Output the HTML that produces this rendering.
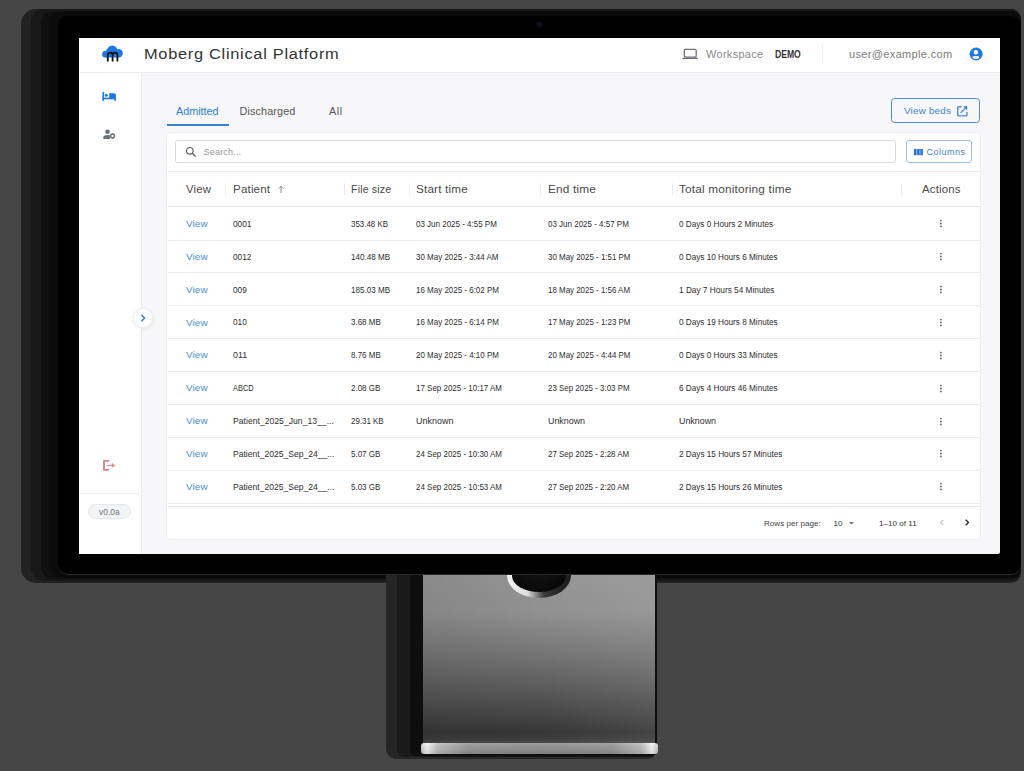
<!DOCTYPE html>
<html><head><meta charset="utf-8">
<style>
*{margin:0;padding:0;box-sizing:border-box}
html,body{width:1024px;height:771px;overflow:hidden;background:#464646;font-family:"Liberation Sans",sans-serif;color:#333}
.a{position:absolute}
.t{position:absolute;line-height:1;white-space:nowrap}
.d{font-size:9.2px;color:#2e2e2e}
#sh1{left:21px;top:9px;width:1000px;height:574px;border-radius:15px 10px 10px 15px;background:#222}
#sh2{left:31px;top:9px;width:990px;height:572px;border-radius:13px 10px 10px 13px;background:#181818}
#sh2b{left:41px;top:11px;width:980px;height:568px;border-radius:12px 10px 10px 12px;background:#0f0f0f}
#sh3{left:51px;top:11px;width:970px;height:567px;border-radius:12px 10px 10px 12px;background:#0b0b0b}
#bez{left:58px;top:16px;width:963px;height:559px;border-radius:10px;background:#000;border-bottom:1px solid #2a2a2a}
#screen{left:79px;top:38px;width:921px;height:516px;background:#f7f7f9;overflow:hidden;border-radius:0 0 2px 2px}
#ssh1{left:386px;top:575px;width:271px;height:184px;border-radius:0 0 10px 10px;background:#262626}
#ssh2{left:397px;top:575px;width:260px;height:182px;border-radius:0 0 8px 8px;background:#1a1a1a}
#ssh3{left:410px;top:575px;width:247px;height:181px;border-radius:0 0 6px 6px;background:#0e0e0e}
#stand{left:423px;top:575px;width:232px;height:169px;overflow:hidden;background:linear-gradient(90deg,rgba(0,0,0,0.07),rgba(255,255,255,0.0) 50%,rgba(255,255,255,0.07)),linear-gradient(180deg,#949494 0%,#909090 22%,#777 45%,#5c5c5c 66%,#454545 83%,#363636 93%,#3c3c3c 97%,#4e4e4e 100%)}
#hole{left:83.6px;top:-22.7px;width:64.5px;height:45.4px;border-radius:50%;background:linear-gradient(90deg,#f2f2f2 0%,#dcdcdc 32%,#8a8a8a 45%,#3a3a3a 58%,#262626 80%,#1e1e1e 100%)}
#hole2{left:88.7px;top:-16.5px;width:54.7px;height:33px;border-radius:50%;background:radial-gradient(ellipse at 50% 30%,#141414 0%,#0b0b0b 60%,#050505 100%)}
#base{left:421px;top:743px;width:237px;height:11px;border-radius:3px;background:linear-gradient(180deg,rgba(255,255,255,0.12),rgba(0,0,0,0.12)),linear-gradient(90deg,#c8c8c8 0%,#f7f7f7 2.5%,#bdbdbd 7%,#959595 20%,#8e8e8e 50%,#959595 80%,#bdbdbd 93%,#f7f7f7 97.5%,#c8c8c8 100%)}
#cam{left:537px;top:22px;width:5px;height:5px;border-radius:50%;background:#0c1220;box-shadow:0 0 1px 0.3px #1a1a1a}
</style></head>
<body>

<div class="a" id="sh1"></div>
<div class="a" id="sh2"></div>
<div class="a" id="sh2b"></div>
<div class="a" id="sh3"></div>
<div class="a" id="ssh1"></div>
<div class="a" id="ssh2"></div>
<div class="a" id="ssh3"></div>
<div class="a" id="stand"><div class="a" id="hole"></div><div class="a" id="hole2"></div></div>
<div class="a" id="bez"></div>
<div class="a" id="base"></div>
<div class="a" id="cam"></div>
<div class="a" id="screen"></div>


<div class="a" style="left:79px;top:38px;width:921px;height:35px;background:#fff;border-bottom:1px solid #ebebeb"></div>
<svg class="a" style="left:101px;top:44px" width="24" height="19" viewBox="0 0 24 19">
 <g fill="#1d7ae4"><circle cx="4.6" cy="10.2" r="3.4"/><circle cx="11.3" cy="6.6" r="5.2"/><circle cx="17.6" cy="9.3" r="4.2"/><circle cx="8" cy="7.5" r="3"/><rect x="4.6" y="8" width="13" height="5.5"/></g>
 <path d="M6.8 17.4 V11.2 C6.8 9.5 7.9 8.7 9.2 8.7 C10.5 8.7 11.6 9.5 11.6 11.2 V17.4 M11.6 11.2 C11.6 9.5 12.7 8.7 14 8.7 C15.3 8.7 16.4 9.5 16.4 11.2 V17.4" stroke="#111" stroke-width="1.8" fill="none"/>
</svg>
<div class="t" style="left:144.2px;top:47.2px;font-size:14px;letter-spacing:0.6px;color:#333;transform:scaleX(1.171);transform-origin:0 0">Moberg Clinical Platform</div>
<svg class="a" style="left:682px;top:48px" width="17" height="12" viewBox="0 0 17 12">
 <rect x="2.3" y="1.4" width="11.9" height="7.6" rx="1" fill="none" stroke="#6b6f76" stroke-width="1.25"/>
 <rect x="0.3" y="9.8" width="15.7" height="1.3" rx="0.4" fill="#6b6f76"/>
</svg>
<div class="t" style="left:706.2px;top:50.3px;font-size:10.1px;letter-spacing:0.3px;color:#8a8a8a;transform:scaleX(1.085);transform-origin:0 0">Workspace</div>
<div class="t" style="left:775px;top:49.9px;font-size:10px;font-weight:bold;color:#333;transform:scaleX(0.86);transform-origin:0 0">DEMO</div>
<div class="a" style="left:822px;top:44px;width:1px;height:20px;background:#ececec"></div>
<div class="t" style="left:849px;top:50.2px;font-size:10.2px;letter-spacing:0.3px;color:#7c7c7c;transform:scaleX(1.084);transform-origin:0 0">user@example.com</div>
<svg class="a" style="left:969px;top:47px" width="14" height="14" viewBox="0 0 14 14">
 <circle cx="7.1" cy="7" r="6.5" fill="#1d7ae4"/>
 <circle cx="6.9" cy="5.3" r="2.2" fill="#fff"/>
 <ellipse cx="6.9" cy="10.5" rx="3.4" ry="1.4" fill="#fff"/>
</svg>


<div class="a" style="left:79px;top:73px;width:63px;height:481px;background:#fff;border-right:1px solid #ececef"></div>
<svg class="a" style="left:102px;top:91px" width="15" height="11" viewBox="0 0 15 11">
 <rect x="0.4" y="1.1" width="1.6" height="8.8" fill="#1d7ae4"/>
 <circle cx="4.3" cy="4.2" r="1.5" fill="#1d7ae4"/>
 <path d="M7.2 2.3 H12.1 C13.1 2.3 13.9 3.1 13.9 4.1 V7.2 H7.2 Z" fill="#1d7ae4"/>
 <rect x="0.4" y="6.7" width="13.5" height="1.6" fill="#1d7ae4"/>
 <rect x="12.4" y="6.7" width="1.5" height="3.2" fill="#1d7ae4"/>
</svg>
<svg class="a" style="left:102px;top:128px" width="15" height="12" viewBox="0 0 15 12">
 <circle cx="5.5" cy="3.8" r="2.3" fill="#6b717a"/>
 <path d="M1.3 10.9 V9.2 C1.3 7.6 3.5 6.9 5.5 6.9 C6.5 6.9 7.3 7 7.9 7.2 V10.9 Z" fill="#6b717a"/>
 <circle cx="10.5" cy="8" r="1.9" fill="none" stroke="#6b717a" stroke-width="1.5"/>
 <rect x="10" y="5.3" width="1" height="1" fill="#6b717a"/><rect x="10" y="9.8" width="1" height="1" fill="#6b717a"/>
</svg>
<svg class="a" style="left:102px;top:458px" width="15" height="14" viewBox="0 0 15 14">
 <path d="M7.1 2.9 H2 V11.9 H7.1" stroke="#de858c" stroke-width="1.9" fill="none" stroke-linejoin="round"/>
 <path d="M4.9 7.4 H11" stroke="#de858c" stroke-width="1.1"/>
 <path d="M10.2 5 L13.1 7.4 L10.2 9.8 Z" fill="#de858c"/>
</svg>
<div class="a" style="left:80px;top:493px;width:59px;height:1px;background:#efeff2"></div>
<div class="a" style="left:88px;top:504px;width:42.5px;height:14.8px;border-radius:8px;background:#f3f4f6;border:1px solid #e5e7eb"></div>
<div class="t" style="left:99px;top:508.3px;font-size:8.4px;letter-spacing:0.05px;color:#6f747c">v0.0a</div>


<div class="t" style="left:176px;top:105.5px;font-size:10.8px;color:#2f7bd3">Admitted</div>
<div class="t" style="left:239.6px;top:105.5px;font-size:10.8px;letter-spacing:0.12px;color:#555">Discharged</div>
<div class="t" style="left:329px;top:105.5px;font-size:10.8px;letter-spacing:0.6px;color:#555">All</div>
<div class="a" style="left:167px;top:124.3px;width:62px;height:1.8px;background:#3a7fd0"></div>
<div class="a" style="left:891.2px;top:98.2px;width:89.2px;height:25px;border:1.8px solid #4b8dd8;border-radius:3.5px"></div>
<div class="t" style="left:903.5px;top:107.2px;font-size:9px;letter-spacing:0.2px;color:#3f84d3;transform:scaleX(1.091);transform-origin:0 0">View beds</div>
<svg class="a" style="left:956px;top:105px" width="12" height="12" viewBox="0 0 12 12">
 <path d="M5.6 1.7 H2.6 Q1.7 1.7 1.7 2.6 V10 Q1.7 10.9 2.6 10.9 H10 Q10.9 10.9 10.9 10 V7" stroke="#4a8ad6" stroke-width="1.4" fill="none"/>
 <path d="M4.8 7.8 L10.2 2.4" stroke="#4a8ad6" stroke-width="1.3"/>
 <path d="M7.2 1.2 H11.2 V5.2 Z" fill="#2f7ad8"/>
</svg>
<div class="a" style="left:165.9px;top:131.9px;width:814.9px;height:408px;background:#fff;border:1px solid #eceef1;border-radius:4px"></div>
<div class="a" style="left:175px;top:140.4px;width:720.8px;height:23px;border:1.2px solid #dcdcdf;border-radius:3px"></div>
<svg class="a" style="left:185px;top:146px" width="12" height="12" viewBox="0 0 12 12">
 <circle cx="4.8" cy="4.8" r="3.3" stroke="#666" stroke-width="1.2" fill="none"/>
 <path d="M7.2 7.2 L10.6 10.6" stroke="#666" stroke-width="1.4"/>
</svg>
<div class="t" style="left:203.5px;top:148.3px;font-size:9.1px;letter-spacing:0.15px;color:#9a9a9a">Search...</div>
<div class="a" style="left:906.2px;top:140.2px;width:66px;height:23.2px;border:1.3px solid #9dbde8;border-radius:3px"></div>
<svg class="a" style="left:914px;top:148.8px" width="9" height="7" viewBox="0 0 9 7">
 <rect x="0" y="0" width="2.5" height="6.2" fill="#1e6fd8"/><rect x="3.15" y="0" width="2.5" height="6.2" fill="#1e6fd8"/><rect x="6.3" y="0" width="2.5" height="6.2" fill="#1e6fd8"/>
</svg>
<div class="t" style="left:926.6px;top:148px;font-size:8.8px;letter-spacing:0.58px;color:#3c82d2">Columns</div>
<div class="a" style="left:168px;top:171px;width:812px;height:1px;background:#eceef1"></div>
<div class="t" style="left:185.9px;top:183.8px;font-size:10.5px;letter-spacing:0.15px;color:#4a4a4a;transform:scaleX(1.087);transform-origin:0 0">View</div>
<div class="t" style="left:233.4px;top:183.8px;font-size:10.5px;letter-spacing:0.15px;color:#4a4a4a;transform:scaleX(1.103);transform-origin:0 0">Patient</div>
<div class="t" style="left:351px;top:183.8px;font-size:10.5px;letter-spacing:0.15px;color:#4a4a4a;transform:scaleX(1.013);transform-origin:0 0">File size</div>
<div class="t" style="left:416.4px;top:183.8px;font-size:10.5px;letter-spacing:0.15px;color:#4a4a4a;transform:scaleX(1.117);transform-origin:0 0">Start time</div>
<div class="t" style="left:547.7px;top:183.8px;font-size:10.5px;letter-spacing:0.15px;color:#4a4a4a;transform:scaleX(1.126);transform-origin:0 0">End time</div>
<div class="t" style="left:678.7px;top:183.8px;font-size:10.5px;letter-spacing:0.15px;color:#4a4a4a;transform:scaleX(1.125);transform-origin:0 0">Total monitoring time</div>
<div class="t" style="left:921.7px;top:183.8px;font-size:10.5px;letter-spacing:0.15px;color:#4a4a4a;transform:scaleX(1.086);transform-origin:0 0">Actions</div>
<svg class="a" style="left:276.5px;top:185px" width="8" height="9" viewBox="0 0 8 9"><path d="M4 8 V1.2 M1.6 3.6 L4 1.2 L6.4 3.6" stroke="#8a8a8a" stroke-width="0.95" fill="none"/></svg>
<div class="a" style="left:225.2px;top:183px;width:1px;height:12px;background:#ececee"></div>
<div class="a" style="left:344.1px;top:183px;width:1px;height:12px;background:#ececee"></div>
<div class="a" style="left:409.2px;top:183px;width:1px;height:12px;background:#ececee"></div>
<div class="a" style="left:540.3px;top:183px;width:1px;height:12px;background:#ececee"></div>
<div class="a" style="left:671.5px;top:183px;width:1px;height:12px;background:#ececee"></div>
<div class="a" style="left:901.2px;top:183px;width:1px;height:12px;background:#ececee"></div>
<div class="a" style="left:168px;top:206px;width:812px;height:1px;background:#e6e7ea"></div>
<div class="t" style="left:185.6px;top:218.94px;font-size:9.4px;letter-spacing:0.1px;color:#4a8fd9;transform:scaleX(1.057);transform-origin:0 0">View</div>
<div class="t d" style="left:232.9px;top:219.91px;transform:scaleX(0.905);transform-origin:0 0">0001</div>
<div class="t d" style="left:351px;top:219.91px;transform:scaleX(0.8628);transform-origin:0 0">353.48 KB</div>
<div class="t d" style="left:416.4px;top:219.91px;transform:scaleX(0.8699);transform-origin:0 0">03 Jun 2025 - 4:55 PM</div>
<div class="t d" style="left:547.7px;top:219.91px;transform:scaleX(0.8699);transform-origin:0 0">03 Jun 2025 - 4:57 PM</div>
<div class="t d" style="left:678.5px;top:219.91px;transform:scaleX(0.8896);transform-origin:0 0">0 Days 0 Hours 2 Minutes</div>
<svg class="a" style="left:939px;top:218.40px" width="4" height="10" viewBox="0 0 4 10"><circle cx="1.9" cy="2.6" r="0.95" fill="#6a6a6a"/><circle cx="1.9" cy="5.5" r="0.95" fill="#6a6a6a"/><circle cx="1.9" cy="8.4" r="0.95" fill="#6a6a6a"/></svg>
<div class="a" style="left:168px;top:239.58px;width:812px;height:1px;background:#ececee"></div>
<div class="t" style="left:185.6px;top:251.80px;font-size:9.4px;letter-spacing:0.1px;color:#4a8fd9;transform:scaleX(1.057);transform-origin:0 0">View</div>
<div class="t d" style="left:232.9px;top:252.77px;transform:scaleX(0.905);transform-origin:0 0">0012</div>
<div class="t d" style="left:351px;top:252.77px;transform:scaleX(0.8795);transform-origin:0 0">140.48 MB</div>
<div class="t d" style="left:416.4px;top:252.77px;transform:scaleX(0.8684);transform-origin:0 0">30 May 2025 - 3:44 AM</div>
<div class="t d" style="left:547.7px;top:252.77px;transform:scaleX(0.8632);transform-origin:0 0">30 May 2025 - 1:51 PM</div>
<div class="t d" style="left:678.5px;top:252.77px;transform:scaleX(0.8901);transform-origin:0 0">0 Days 10 Hours 6 Minutes</div>
<svg class="a" style="left:939px;top:251.26px" width="4" height="10" viewBox="0 0 4 10"><circle cx="1.9" cy="2.6" r="0.95" fill="#6a6a6a"/><circle cx="1.9" cy="5.5" r="0.95" fill="#6a6a6a"/><circle cx="1.9" cy="8.4" r="0.95" fill="#6a6a6a"/></svg>
<div class="a" style="left:168px;top:272.46px;width:812px;height:1px;background:#ececee"></div>
<div class="t" style="left:185.6px;top:284.66px;font-size:9.4px;letter-spacing:0.1px;color:#4a8fd9;transform:scaleX(1.057);transform-origin:0 0">View</div>
<div class="t d" style="left:232.9px;top:285.63px;transform:scaleX(0.9);transform-origin:0 0">009</div>
<div class="t d" style="left:351px;top:285.63px;transform:scaleX(0.8795);transform-origin:0 0">185.03 MB</div>
<div class="t d" style="left:416.4px;top:285.63px;transform:scaleX(0.8684);transform-origin:0 0">16 May 2025 - 6:02 PM</div>
<div class="t d" style="left:547.7px;top:285.63px;transform:scaleX(0.8632);transform-origin:0 0">18 May 2025 - 1:56 AM</div>
<div class="t d" style="left:678.5px;top:285.63px;transform:scaleX(0.8991);transform-origin:0 0">1 Day 7 Hours 54 Minutes</div>
<svg class="a" style="left:939px;top:284.12px" width="4" height="10" viewBox="0 0 4 10"><circle cx="1.9" cy="2.6" r="0.95" fill="#6a6a6a"/><circle cx="1.9" cy="5.5" r="0.95" fill="#6a6a6a"/><circle cx="1.9" cy="8.4" r="0.95" fill="#6a6a6a"/></svg>
<div class="a" style="left:168px;top:305.34px;width:812px;height:1px;background:#ececee"></div>
<div class="t" style="left:185.6px;top:317.52px;font-size:9.4px;letter-spacing:0.1px;color:#4a8fd9;transform:scaleX(1.057);transform-origin:0 0">View</div>
<div class="t d" style="left:232.9px;top:318.49px;transform:scaleX(0.9);transform-origin:0 0">010</div>
<div class="t d" style="left:351px;top:318.49px;transform:scaleX(0.8706);transform-origin:0 0">3.68 MB</div>
<div class="t d" style="left:416.4px;top:318.49px;transform:scaleX(0.8674);transform-origin:0 0">16 May 2025 - 6:14 PM</div>
<div class="t d" style="left:547.7px;top:318.49px;transform:scaleX(0.8632);transform-origin:0 0">17 May 2025 - 1:23 PM</div>
<div class="t d" style="left:678.5px;top:318.49px;transform:scaleX(0.8901);transform-origin:0 0">0 Days 19 Hours 8 Minutes</div>
<svg class="a" style="left:939px;top:316.98px" width="4" height="10" viewBox="0 0 4 10"><circle cx="1.9" cy="2.6" r="0.95" fill="#6a6a6a"/><circle cx="1.9" cy="5.5" r="0.95" fill="#6a6a6a"/><circle cx="1.9" cy="8.4" r="0.95" fill="#6a6a6a"/></svg>
<div class="a" style="left:168px;top:338.22px;width:812px;height:1px;background:#ececee"></div>
<div class="t" style="left:185.6px;top:350.38px;font-size:9.4px;letter-spacing:0.1px;color:#4a8fd9;transform:scaleX(1.057);transform-origin:0 0">View</div>
<div class="t d" style="left:232.9px;top:351.35px;transform:scaleX(0.9643);transform-origin:0 0">011</div>
<div class="t d" style="left:351px;top:351.35px;transform:scaleX(0.8706);transform-origin:0 0">8.76 MB</div>
<div class="t d" style="left:416.4px;top:351.35px;transform:scaleX(0.8674);transform-origin:0 0">20 May 2025 - 4:10 PM</div>
<div class="t d" style="left:547.7px;top:351.35px;transform:scaleX(0.8632);transform-origin:0 0">20 May 2025 - 4:44 PM</div>
<div class="t d" style="left:678.5px;top:351.35px;transform:scaleX(0.8901);transform-origin:0 0">0 Days 0 Hours 33 Minutes</div>
<svg class="a" style="left:939px;top:349.84px" width="4" height="10" viewBox="0 0 4 10"><circle cx="1.9" cy="2.6" r="0.95" fill="#6a6a6a"/><circle cx="1.9" cy="5.5" r="0.95" fill="#6a6a6a"/><circle cx="1.9" cy="8.4" r="0.95" fill="#6a6a6a"/></svg>
<div class="a" style="left:168px;top:371.10px;width:812px;height:1px;background:#ececee"></div>
<div class="t" style="left:185.6px;top:383.24px;font-size:9.4px;letter-spacing:0.1px;color:#4a8fd9;transform:scaleX(1.057);transform-origin:0 0">View</div>
<div class="t d" style="left:232.9px;top:384.21px;transform:scaleX(0.8077);transform-origin:0 0">ABCD</div>
<div class="t d" style="left:351px;top:384.21px;transform:scaleX(0.8697);transform-origin:0 0">2.08 GB</div>
<div class="t d" style="left:416.4px;top:384.21px;transform:scaleX(0.8677);transform-origin:0 0">17 Sep 2025 - 10:17 AM</div>
<div class="t d" style="left:547.7px;top:384.21px;transform:scaleX(0.8638);transform-origin:0 0">23 Sep 2025 - 3:03 PM</div>
<div class="t d" style="left:678.5px;top:384.21px;transform:scaleX(0.8901);transform-origin:0 0">6 Days 4 Hours 46 Minutes</div>
<svg class="a" style="left:939px;top:382.70px" width="4" height="10" viewBox="0 0 4 10"><circle cx="1.9" cy="2.6" r="0.95" fill="#6a6a6a"/><circle cx="1.9" cy="5.5" r="0.95" fill="#6a6a6a"/><circle cx="1.9" cy="8.4" r="0.95" fill="#6a6a6a"/></svg>
<div class="a" style="left:168px;top:403.98px;width:812px;height:1px;background:#ececee"></div>
<div class="t" style="left:185.6px;top:416.10px;font-size:9.4px;letter-spacing:0.1px;color:#4a8fd9;transform:scaleX(1.057);transform-origin:0 0">View</div>
<div class="t d" style="left:232.9px;top:417.07px;transform:scaleX(0.9402);transform-origin:0 0">Patient_2025_Jun_13__...</div>
<div class="t d" style="left:351px;top:417.07px;transform:scaleX(0.8632);transform-origin:0 0">29.31 KB</div>
<div class="t d" style="left:416.4px;top:417.07px;transform:scaleX(0.9763);transform-origin:0 0">Unknown</div>
<div class="t d" style="left:547.7px;top:417.07px;transform:scaleX(0.9658);transform-origin:0 0">Unknown</div>
<div class="t d" style="left:678.5px;top:417.07px;transform:scaleX(0.9658);transform-origin:0 0">Unknown</div>
<svg class="a" style="left:939px;top:415.56px" width="4" height="10" viewBox="0 0 4 10"><circle cx="1.9" cy="2.6" r="0.95" fill="#6a6a6a"/><circle cx="1.9" cy="5.5" r="0.95" fill="#6a6a6a"/><circle cx="1.9" cy="8.4" r="0.95" fill="#6a6a6a"/></svg>
<div class="a" style="left:168px;top:436.86px;width:812px;height:1px;background:#ececee"></div>
<div class="t" style="left:185.6px;top:448.96px;font-size:9.4px;letter-spacing:0.1px;color:#4a8fd9;transform:scaleX(1.057);transform-origin:0 0">View</div>
<div class="t d" style="left:232.9px;top:449.93px;transform:scaleX(0.9315);transform-origin:0 0">Patient_2025_Sep_24__...</div>
<div class="t d" style="left:351px;top:449.93px;transform:scaleX(0.8697);transform-origin:0 0">5.07 GB</div>
<div class="t d" style="left:416.4px;top:449.93px;transform:scaleX(0.8677);transform-origin:0 0">24 Sep 2025 - 10:30 AM</div>
<div class="t d" style="left:547.7px;top:449.93px;transform:scaleX(0.8638);transform-origin:0 0">27 Sep 2025 - 2:28 AM</div>
<div class="t d" style="left:678.5px;top:449.93px;transform:scaleX(0.8922);transform-origin:0 0">2 Days 15 Hours 57 Minutes</div>
<svg class="a" style="left:939px;top:448.42px" width="4" height="10" viewBox="0 0 4 10"><circle cx="1.9" cy="2.6" r="0.95" fill="#6a6a6a"/><circle cx="1.9" cy="5.5" r="0.95" fill="#6a6a6a"/><circle cx="1.9" cy="8.4" r="0.95" fill="#6a6a6a"/></svg>
<div class="a" style="left:168px;top:469.74px;width:812px;height:1px;background:#ececee"></div>
<div class="t" style="left:185.6px;top:481.82px;font-size:9.4px;letter-spacing:0.1px;color:#4a8fd9;transform:scaleX(1.057);transform-origin:0 0">View</div>
<div class="t d" style="left:232.9px;top:482.79px;transform:scaleX(0.9315);transform-origin:0 0">Patient_2025_Sep_24__...</div>
<div class="t d" style="left:351px;top:482.79px;transform:scaleX(0.8697);transform-origin:0 0">5.03 GB</div>
<div class="t d" style="left:416.4px;top:482.79px;transform:scaleX(0.8677);transform-origin:0 0">24 Sep 2025 - 10:53 AM</div>
<div class="t d" style="left:547.7px;top:482.79px;transform:scaleX(0.8638);transform-origin:0 0">27 Sep 2025 - 2:20 AM</div>
<div class="t d" style="left:678.5px;top:482.79px;transform:scaleX(0.8922);transform-origin:0 0">2 Days 15 Hours 26 Minutes</div>
<svg class="a" style="left:939px;top:481.28px" width="4" height="10" viewBox="0 0 4 10"><circle cx="1.9" cy="2.6" r="0.95" fill="#6a6a6a"/><circle cx="1.9" cy="5.5" r="0.95" fill="#6a6a6a"/><circle cx="1.9" cy="8.4" r="0.95" fill="#6a6a6a"/></svg>
<div class="a" style="left:168px;top:502.62px;width:812px;height:1px;background:#ececee"></div>

<div class="a" style="left:168px;top:506px;width:812px;height:1px;background:#e6e7ea"></div>
<div class="t" style="left:764px;top:519.5px;font-size:8.1px;letter-spacing:0px;color:#444">Rows per page:</div>
<div class="t" style="left:833.5px;top:519.5px;font-size:8.1px;color:#333">10</div>
<svg class="a" style="left:849px;top:522px" width="5" height="3" viewBox="0 0 5 3"><path d="M0 0 H5 L2.5 2.6Z" fill="#777"/></svg>
<div class="t" style="left:879px;top:519.5px;font-size:8.1px;color:#333">1–10 of 11</div>
<svg class="a" style="left:939px;top:518px" width="6" height="9" viewBox="0 0 6 9"><path d="M4.3 1.8 L1.6 4.5 L4.3 7.2" stroke="#c4c4c4" stroke-width="1.2" fill="none"/></svg>
<svg class="a" style="left:964px;top:518px" width="6" height="9" viewBox="0 0 6 9"><path d="M1.7 1.8 L4.4 4.5 L1.7 7.2" stroke="#333" stroke-width="1.5" fill="none"/></svg>


<div class="a" style="left:133px;top:308px;width:20px;height:20px;border-radius:50%;background:#fff;border:1px solid #eeeeef;box-shadow:0 1px 5px rgba(0,0,0,0.07)"></div>
<svg class="a" style="left:139px;top:313px" width="8" height="10" viewBox="0 0 8 10"><path d="M2.4 1.8 L5.5 5 L2.4 8.2" stroke="#3580d8" stroke-width="1.5" fill="none"/></svg>

</body></html>
